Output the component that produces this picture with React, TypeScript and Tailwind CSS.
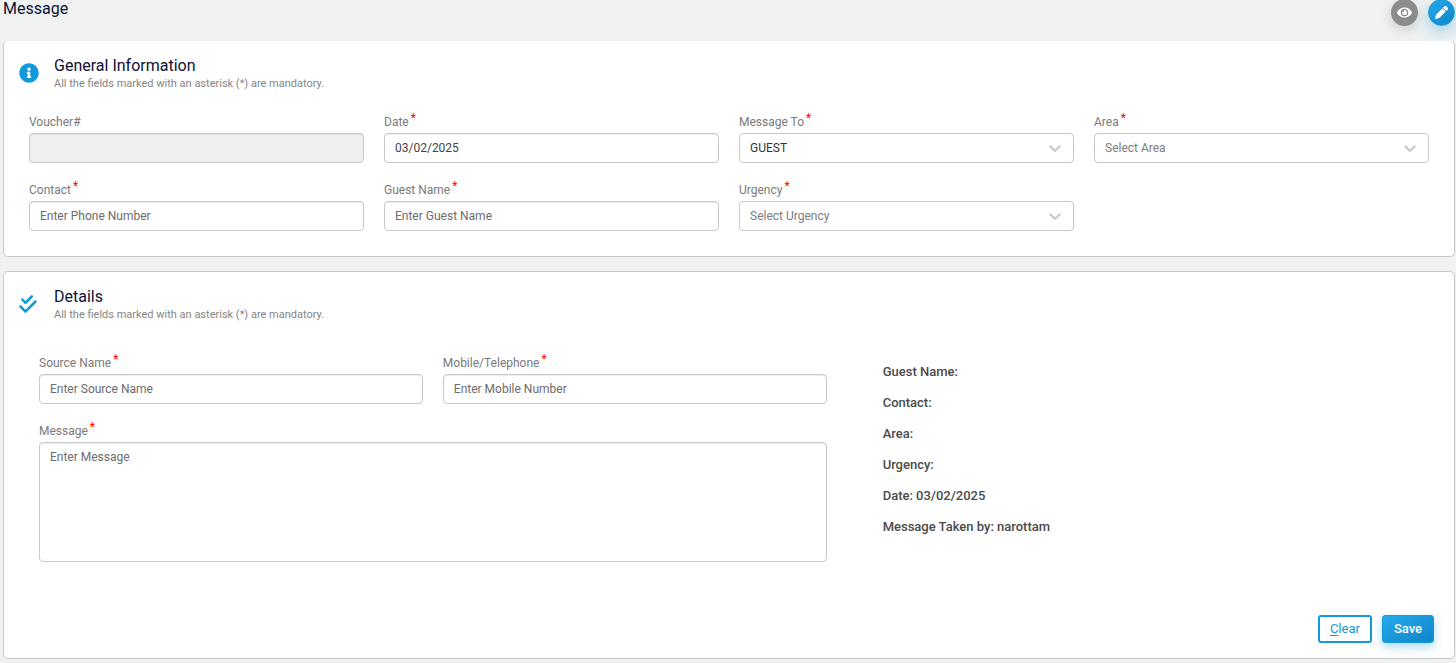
import { useState } from "react";
import type { ReactNode } from "react";
import { FaEye, FaInfoCircle } from "react-icons/fa";
import { FaCheckDouble, FaPen } from "react-icons/fa6";

const INPUT =
  "block w-full rounded border border-[#c8c8c8] px-2.5 text-xs text-[#444] shadow-[inset_0_1px_1px_rgba(0,0,0,0.075)] outline-none placeholder:text-[#6c6c6c] focus:border-[#1299dc]";

type FieldProps = { id: string; label: string; required?: boolean; children: ReactNode };

function Field({ id, label, required = true, children }: FieldProps) {
  return (
    <div>
      <label htmlFor={id} className="flex h-[19px] gap-0.5 text-xs leading-4 text-[#7a7a7a]">
        <span>{label}</span>
        {required && <span className="-mt-1 text-[#ff0000]">*</span>}
      </label>
      {children}
    </div>
  );
}

type TextFieldProps = {
  id: string;
  label: string;
  placeholder?: string;
  defaultValue?: string;
  disabled?: boolean;
  required?: boolean;
};

function TextField({ id, label, required, ...rest }: TextFieldProps) {
  return (
    <Field id={id} label={label} required={required}>
      <input id={id} type="text" className={`${INPUT} h-[30px] bg-white disabled:bg-[#f0f0f0]`} {...rest} />
    </Field>
  );
}

type SelectFieldProps = { id: string; label: string; placeholder?: string; options: string[]; initial?: string };

function SelectField({ id, label, placeholder, options, initial = "" }: SelectFieldProps) {
  const [value, setValue] = useState(initial);
  return (
    <Field id={id} label={label}>
      <div className="relative">
        <select
          id={id}
          value={value}
          onChange={(e) => setValue(e.target.value)}
          className={`block h-[30px] w-full appearance-none rounded border border-[#c8c8c8] bg-white px-2.5 text-xs outline-none focus:border-[#1299dc] ${
            value ? "text-[#333]" : "text-[#7d7d7d]"
          }`}
        >
          {placeholder && <option value="">{placeholder}</option>}
          {options.map((o) => (
            <option key={o}>{o}</option>
          ))}
        </select>
        <svg
          viewBox="0 0 20 20"
          aria-hidden="true"
          className="pointer-events-none absolute top-[5px] right-[9px] size-5 fill-[#ccc]"
        >
          <path d="M4.516 7.548c0.436-0.446 1.043-0.481 1.576 0l3.908 3.747 3.908-3.747c0.533-0.481 1.141-0.446 1.574 0 0.436 0.445 0.408 1.197 0 1.615-0.406 0.418-4.695 4.502-4.695 4.502-0.217 0.223-0.502 0.335-0.787 0.335s-0.57-0.112-0.789-0.335c0 0-4.287-4.084-4.695-4.502s-0.436-1.17 0-1.615z" />
        </svg>
      </div>
    </Field>
  );
}

function CardHeader({ icon, title }: { icon: ReactNode; title: string }) {
  return (
    <div className="flex px-[15px] pt-[15px]">
      <div className="w-[35px] pt-[7px] text-[#1299dc]">{icon}</div>
      <div>
        <h2 className="text-base leading-5 text-[#0d1136]">{title}</h2>
        <p className="text-[11px] leading-4 text-[#858585]">
          All the fields marked with an asterisk (*) are mandatory.
        </p>
      </div>
    </div>
  );
}

const SUMMARY = [
  "Guest Name:",
  "Contact:",
  "Area:",
  "Urgency:",
  "Date: 03/02/2025",
  "Message Taken by: narottam",
];

export default function App() {
  return (
    <main className="min-h-screen bg-[#f0f2f1] pr-px pb-1 pl-[3px] font-[Roboto,sans-serif]">
      <header className="flex h-[41px] items-start justify-between">
        <h1 className="text-base leading-[18px] text-[#0d1136]">Message</h1>
        <div className="-mt-px flex gap-2.5">
          <button
            type="button"
            aria-label="View"
            className="flex size-[27px] items-center justify-center rounded-full bg-[#8c8c8c] text-white shadow-[0_4px_12px_rgba(0,0,0,0.15)]"
          >
            <FaEye className="size-[15px]" />
          </button>
          <button
            type="button"
            aria-label="Edit"
            className="flex size-[27px] items-center justify-center rounded-full border border-[#1299dc] bg-linear-to-br from-[#25a9ee] to-[#0f86c6] text-white shadow-[0_6px_16px_rgba(18,153,220,0.35)]"
          >
            <FaPen className="size-[13px]" />
          </button>
        </div>
      </header>

      <form>
        <section className="rounded-[5px] border border-t-0 border-[#c8c8c8] bg-white">
          <CardHeader icon={<FaInfoCircle className="size-5" />} title="General Information" />
          <div className="mt-[22px] grid grid-cols-4 gap-x-5 gap-y-[19px] px-[25px] pb-[25px]">
            <TextField id="voucher" label="Voucher#" required={false} disabled />
            <TextField id="date" label="Date" defaultValue="03/02/2025" />
            <SelectField id="message-to" label="Message To" options={["GUEST"]} initial="GUEST" />
            <SelectField id="area" label="Area" placeholder="Select Area" options={[]} />
            <TextField id="contact" label="Contact" placeholder="Enter Phone Number" />
            <TextField id="guest-name" label="Guest Name" placeholder="Enter Guest Name" />
            <SelectField id="urgency" label="Urgency" placeholder="Select Urgency" options={[]} />
          </div>
        </section>

        <section className="mt-3.5 rounded-[5px] border border-[#c8c8c8] bg-white">
          <CardHeader icon={<FaCheckDouble className="h-5 w-[18px]" />} title="Details" />
          <div className="mt-8 grid grid-cols-[10fr_7fr] gap-x-14 pr-5 pl-[35px]">
            <div className="grid grid-cols-2 gap-x-5 gap-y-[19px]">
              <TextField id="source-name" label="Source Name" placeholder="Enter Source Name" />
              <TextField id="mobile" label="Mobile/Telephone" placeholder="Enter Mobile Number" />
              <div className="col-span-2">
                <Field id="message" label="Message">
                  <textarea
                    id="message"
                    placeholder="Enter Message"
                    className={`${INPUT} h-[120px] resize-none bg-white py-1.5`}
                  />
                </Field>
              </div>
            </div>
            <div className="pt-px text-[13px] leading-[31px] font-medium text-[#4a4a4a]">
              {SUMMARY.map((line) => (
                <p key={line}>{line}</p>
              ))}
            </div>
          </div>
          <div className="mt-[53px] flex justify-end gap-2.5 pr-5 pb-[15px]">
            <button
              type="reset"
              className="h-7 rounded-[3px] border-2 border-[#1299dc] bg-white px-2.5 text-[13px] font-normal text-[#1299dc]"
            >
              <span className="underline underline-offset-2">C</span>lear
            </button>
            <button
              type="button"
              className="h-7 rounded-[3px] border border-[#1299dc] bg-linear-to-br from-[#25a9ee] to-[#0f86c6] px-[11px] text-[13px] font-medium text-white shadow-[0_4px_10px_rgba(18,153,220,0.35)]"
            >
              Save
            </button>
          </div>
        </section>
      </form>
    </main>
  );
}
